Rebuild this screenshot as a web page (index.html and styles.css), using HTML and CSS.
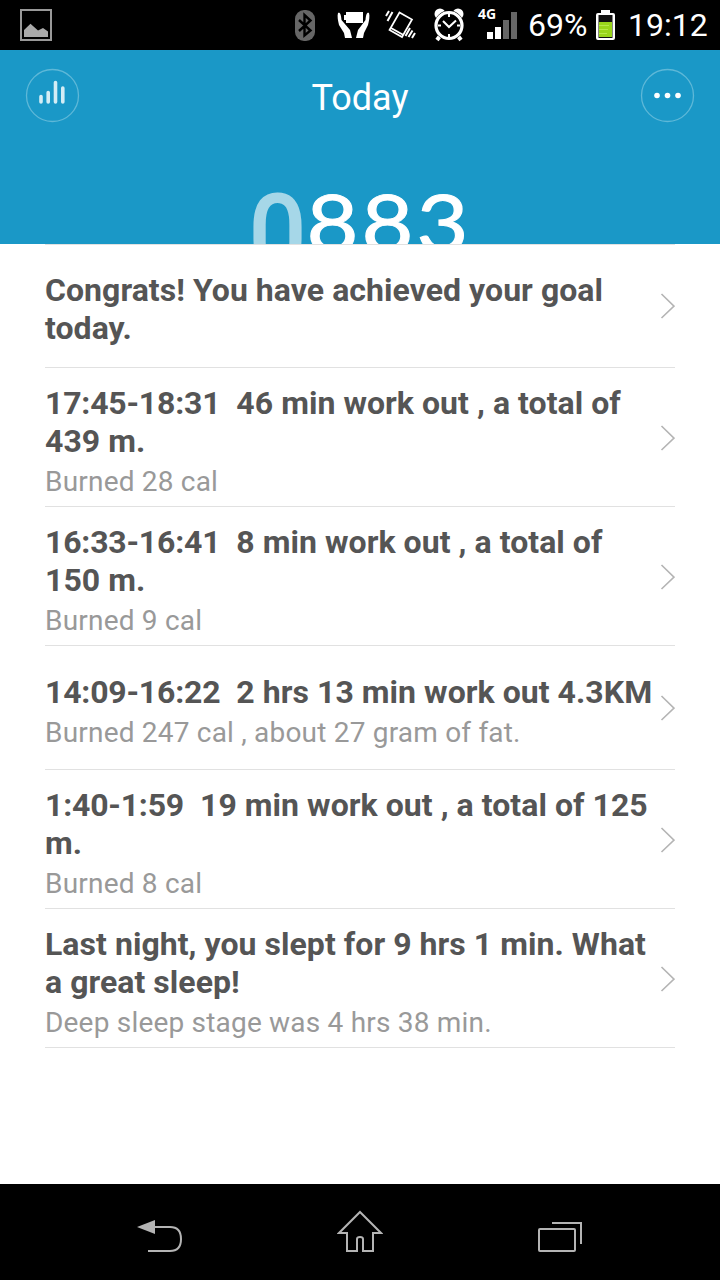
FILE: index.html
```html
<!DOCTYPE html>
<html lang="en">
<head>
  <meta charset="UTF-8" />
  <meta name="viewport" content="width=device-width, initial-scale=1.0" />
  <title>Today</title>
  <link rel="stylesheet" href="styles.css">
</head>
<body>
  <div class="statusbar">
    <svg class="icon-picture" width="32" height="32" viewBox="0 0 32 32">
      <rect x="1" y="1" width="30" height="30" fill="none" stroke="#999" stroke-width="2" />
      <path d="M4 28V21L10.500 14.800L18 21.500L23 19L28 22.500V28Z" fill="#aaa" />
    </svg>
    <div class="status-icons">
      <svg class="icon-bt" width="20" height="31" viewBox="0 0 20 31">
        <rect width="20" height="31" rx="9" fill="#666" />
        <path d="M4 10L15.500 20.500L9.500 25.500V5L15.500 10.500L4 21" fill="none" stroke="#000" stroke-width="2.400" />
      </svg>
      <svg class="icon-stamina" width="34" height="27" viewBox="0 0 34 27" fill="#fff">
        <path d="M9 0H26V11H9V8H7V3H9Z" />
        <path d="M1 1C3 0 4 2 4.500 8L13 18L15 26H8L7 21L2 13C1 9 0 4 1 1Z" />
        <path d="M32 1C30 0 29 2 28.500 8L21 18L19 26H26L27 21L31 13C32 9 33 4 32 1Z" />
      </svg>
      <svg class="icon-vibrate" width="32" height="30" viewBox="0 0 32 30" fill="none" stroke="#fff" stroke-width="1.700">
        <path d="M14.500 2.500L27 9.500L17 27L4.500 20ZM6 18L18.500 25" />
        <path d="M4 1L1 6M7.500 2L2.500 11M25 18L20.500 26M27.500 20.500L23.500 27M30 23L27 28" stroke-width="2" />
      </svg>
      <svg class="icon-alarm" width="32" height="34" viewBox="0 0 32 34">
        <path d="M7 28L4 32M25 28L28 32" stroke="#fff" stroke-width="4" />
        <circle cx="7" cy="6" r="5.500" fill="#fff" />
        <circle cx="25" cy="6" r="5.500" fill="#fff" />
        <circle cx="16" cy="17.500" r="15" fill="#000" />
        <circle cx="16" cy="17.500" r="13" fill="#000" stroke="#fff" stroke-width="3.200" />
        <path d="M10 13L16 19L23 12.500" fill="none" stroke="#fff" stroke-width="2" />
        <path d="M16 6V9M16 26V29M5 17.500H8M24 17.500H27" stroke="#fff" stroke-width="2" />
      </svg>
      <div class="signal">
        <span class="signal-type">4G</span>
        <svg width="30" height="27" viewBox="0 0 30 27">
          <path d="M0 20H6V27H0ZM8 15H14V27H8Z" fill="#fff" />
          <path d="M16 8H22V27H16ZM24 0H30V27H24Z" fill="#666" />
        </svg>
      </div>
      <span class="percent">69%</span>
      <svg class="icon-battery" width="19" height="30" viewBox="0 0 19 30">
        <path d="M5 0H14V3H17Q19 3 19 5V28Q19 30 17 30H2Q0 30 0 28V5Q0 3 2 3H5Z" fill="#fff" />
        <rect x="2.500" y="5" width="14" height="23" fill="#111" />
        <rect x="3" y="12" width="13" height="15" fill="#99d51b" />
        <path d="M3 15.500H13M3 19.500H12M3 23.500H11" stroke="#b6e84a" />
      </svg>
      <span class="clock">19:12</span>
    </div>
  </div>

  <header class="header">
    <div class="header-bar">
      <svg width="55" height="55" viewBox="0 0 55 55">
        <circle cx="27.500" cy="27.500" r="26" fill="none" stroke="#5eb8d8" stroke-width="1.300" />
        <path d="M16 29.500V35M23.200 25.500V35M30.500 15.500V35M37.800 21V35" transform="translate(0 -1)" stroke="#d4edf5" stroke-width="3.600" stroke-linecap="round" />
      </svg>
      <h1 class="title">Today</h1>
      <svg width="55" height="55" viewBox="0 0 55 55">
        <circle cx="27.500" cy="27.500" r="26" fill="none" stroke="#5eb8d8" stroke-width="1.300" />
        <g fill="#fff"><circle cx="17" cy="27.500" r="2.800" /><circle cx="27.500" cy="27.500" r="2.800" /><circle cx="38" cy="27.500" r="2.800" /></g>
      </svg>
    </div>
    <div class="steps"><span class="pad">0</span><span>8</span><span>8</span><span>3</span></div>
  </header>

  <main class="list">
    <div class="item short">
      <div class="text">
        <h2>Congrats! You have achieved your goal<br>today.</h2>
      </div>
      <svg class="arrow" width="15" height="26" viewBox="0 0 15 26"><path d="M1.500 1L14 13.200L1.500 25" /></svg>
    </div>
    <div class="item">
      <div class="text">
        <h2><span class="time">17:45-18:31</span>&nbsp; 46 min work out , a total of<br>439 m.</h2>
        <p>Burned 28 cal</p>
      </div>
      <svg class="arrow" width="15" height="26" viewBox="0 0 15 26"><path d="M1.500 1L14 13.200L1.500 25" /></svg>
    </div>
    <div class="item">
      <div class="text">
        <h2><span class="time">16:33-16:41</span>&nbsp; 8 min work out , a total of<br>150 m.</h2>
        <p>Burned 9 cal</p>
      </div>
      <svg class="arrow" width="15" height="26" viewBox="0 0 15 26"><path d="M1.500 1L14 13.200L1.500 25" /></svg>
    </div>
    <div class="item short">
      <div class="text">
        <h2><span class="time">14:09-16:22</span>&nbsp; 2 hrs 13 min work out 4.3KM</h2>
        <p>Burned 247 cal , about 27 gram of fat.</p>
      </div>
      <svg class="arrow" width="15" height="26" viewBox="0 0 15 26"><path d="M1.500 1L14 13.200L1.500 25" /></svg>
    </div>
    <div class="item">
      <div class="text">
        <h2><span class="time">1:40-1:59</span>&nbsp; 19 min work out , a total of 125<br>m.</h2>
        <p>Burned 8 cal</p>
      </div>
      <svg class="arrow" width="15" height="26" viewBox="0 0 15 26"><path d="M1.500 1L14 13.200L1.500 25" /></svg>
    </div>
    <div class="item">
      <div class="text">
        <h2>Last night, you slept for 9 hrs 1 min. What<br>a great sleep!</h2>
        <p>Deep sleep stage was 4 hrs 38 min.</p>
      </div>
      <svg class="arrow" width="15" height="26" viewBox="0 0 15 26"><path d="M1.500 1L14 13.200L1.500 25" /></svg>
    </div>
  </main>

  <nav class="navbar">
    <svg width="46" height="44" viewBox="0 0 46 44">
      <path d="M0 18L18 11V25Z" fill="#b4b4b4" />
      <path d="M17 18H33Q44 18 44 30T33 42H11" fill="none" stroke="#b4b4b4" stroke-width="2" />
    </svg>
    <svg width="46" height="44" viewBox="0 0 46 44">
      <path d="M23 3L44 24H36V42H26V30Q26 28 23 28T20 30V42H10V24H2Z" fill="none" stroke="#b4b4b4" stroke-width="2" />
    </svg>
    <svg width="46" height="44" viewBox="0 0 46 44">
      <rect x="2" y="20" width="36" height="22" rx="1" fill="none" stroke="#b4b4b4" stroke-width="2" />
      <path d="M15 14H44V35" fill="none" stroke="#b4b4b4" stroke-width="2" />
    </svg>
  </nav>
</body>
</html>
```

FILE: styles.css
```css
body {
  margin: 0;
  height: 1280px;
  display: flex;
  flex-direction: column;
  background-color: #fff;
  font-family: Roboto, 'Noto Sans', sans-serif;
  overflow: hidden;
}
svg {
  display: block;
  flex: none;
}

/* status bar */
.statusbar {
  box-sizing: border-box;
  height: 50px;
  padding: 0 12px 0 20px;
  display: flex;
  justify-content: space-between;
  align-items: center;
  background-color: #000;
  color: #fff;
}
.status-icons {
  display: flex;
  align-items: center;
  height: 50px;
}
.icon-bt {
  margin-right: 22px;
}
.icon-stamina {
  margin-right: 14px;
}
.icon-vibrate {
  margin-right: 16px;
}
.icon-alarm {
  margin-right: 13px;
}
.signal {
  display: flex;
  width: 39px;
  height: 27px;
  margin-right: 11px;
}
.signal svg {
  margin-left: -10px;
}
.signal-type {
  width: 19px;
  margin-top: -7px;
  font: bold 14px/18px 'Open Sans', sans-serif;
}
.percent,
.clock {
  font-size: 32px;
  line-height: 52px;
}
.percent {
  width: 57px;
  margin-right: 11px;
}
.clock {
  width: 80px;
  margin-left: 13px;
}

/* header */
.header {
  height: 194px;
  background-color: #1a98c7;
  color: #fff;
  overflow: hidden;
}
.header-bar {
  display: flex;
  justify-content: space-between;
  align-items: center;
  padding: 18px 25px 0;
}
.title {
  margin: 5px 0 0;
  font-size: 36px;
  line-height: 44px;
  font-weight: 400;
}
.steps {
  display: flex;
  justify-content: center;
  height: 60px;
  margin-top: 47px;
  font-family: Lato, sans-serif;
  font-size: 80px;
  line-height: 102px;
}
.steps span {
  width: 55px;
  display: flex;
  justify-content: center;
  -webkit-text-stroke: 1px #fff;
  transform: scaleX(1.12);
}
.steps .pad {
  margin-top: 10px;
  font-family: Roboto, sans-serif;
  font-size: 112px;
  font-weight: 500;
  line-height: 110px;
  color: #a6d7e8;
  -webkit-text-stroke: 0;
  transform: scaleX(0.92);
}

/* activity list */
.list {
  flex: 1;
  margin: 0 45px;
  border-top: 1px solid #e1e1e1;
}
.item {
  display: flex;
  align-items: center;
  justify-content: space-between;
  box-sizing: border-box;
  min-height: 124px;
  border-bottom: 1px solid #e1e1e1;
}
.item:first-child {
  min-height: 123px;
}
.text {
  padding: 16px 0 8px;
  white-space: nowrap;
}
.short .text {
  padding: 15px 0 9px;
}
.text h2 {
  margin: 0;
  font-size: 32px;
  line-height: 38px;
  letter-spacing: 0.05px;
  color: #555;
}
.text .time {
  letter-spacing: -0.2px;
}
.text p {
  margin: 5px 0 0;
  font-size: 28px;
  line-height: 33px;
  letter-spacing: 0.2px;
  color: #999;
}
.arrow {
  margin-top: 1px;
  fill: none;
  stroke: #b4b4b4;
  stroke-width: 1.6;
}
.short .arrow {
  margin-top: 0;
}

/* navigation bar */
.navbar {
  box-sizing: border-box;
  height: 96px;
  padding: 25px 137px 0;
  display: flex;
  justify-content: space-between;
  background-color: #000;
}
```
